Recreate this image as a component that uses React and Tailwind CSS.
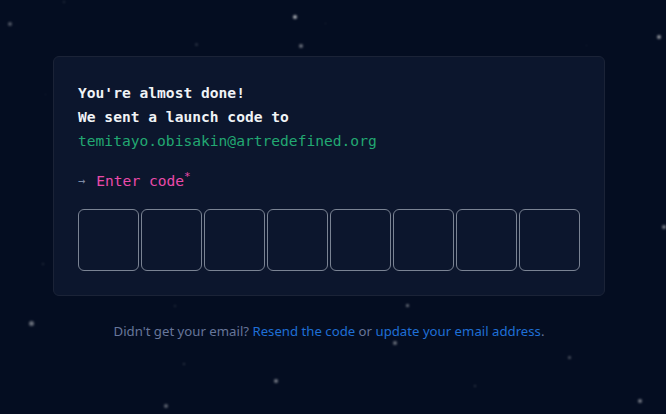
import React from 'react';

const STARS = [
  { x: 293, y: 15, s: 4, o: 0.65 },
  { x: 8, y: 22, s: 4, o: 0.3 },
  { x: 299, y: 44, s: 4, o: 0.4 },
  { x: 657, y: 35, s: 4, o: 0.55 },
  { x: 195, y: 43, s: 3, o: 0.15 },
  { x: 325, y: 23, s: 1, o: 0.2 },
  { x: 63, y: 1, s: 2, o: 0.15 },
  { x: 586, y: 45, s: 1, o: 0.15 },
  { x: 45, y: 94, s: 1, o: 0.15 },
  { x: 42, y: 263, s: 2, o: 0.15 },
  { x: 662, y: 225, s: 4, o: 0.45 },
  { x: 29, y: 321, s: 5, o: 0.4 },
  { x: 406, y: 304, s: 3, o: 0.45 },
  { x: 393, y: 341, s: 4, o: 0.4 },
  { x: 274, y: 379, s: 4, o: 0.45 },
  { x: 164, y: 404, s: 4, o: 0.35 },
  { x: 568, y: 356, s: 3, o: 0.3 },
  { x: 638, y: 399, s: 4, o: 0.45 },
  { x: 183, y: 363, s: 2, o: 0.2 },
  { x: 474, y: 385, s: 2, o: 0.2 },
  { x: 174, y: 305, s: 2, o: 0.15 },
  { x: 277, y: 334, s: 3, o: 0.15 },
];

const mono = { fontFamily: '"DejaVu Sans Mono", "Liberation Mono", monospace' };

export default function App() {
  return (
    <div className="relative min-h-[414px] w-full overflow-hidden bg-[#040d21]">
      {STARS.map((st, i) => (
        <span
          key={i}
          className="absolute rounded-full bg-white blur-[1px]"
          style={{ left: st.x, top: st.y, width: st.s, height: st.s, opacity: st.o }}
        />
      ))}

      <div className="relative flex flex-col items-center pt-[56px] pr-2">
        <div className="w-[552px] rounded-md border border-[#1b2337] bg-[#0c162d] p-6" style={mono}>
          <div className="text-[14.6px] font-bold leading-6 text-[#f0f3f6]">
            <p>You're almost done!</p>
            <p>We sent a launch code to</p>
          </div>
          <p className="text-[14.6px] leading-6 text-[#22a872]">temitayo.obisakin@artredefined.org</p>

          <div className="mt-4 flex items-center text-[14.6px] leading-6">
            <span className="text-[12px] text-[#7d8ba5]">→</span>
            <span className="ml-[11px] text-[#ea4aaa]">Enter code</span>
            <span className="-mt-2 text-[11px] text-[#ea4aaa]">*</span>
          </div>

          <div className="mt-4 flex gap-[2px]">
            {Array.from({ length: 8 }).map((_, i) => (
              <div key={i} className="h-[62px] w-[61px] rounded-md border border-[#7a8393] bg-[#0c162d]" />
            ))}
          </div>
        </div>

        <p
          className="mt-[26px] text-[13.2px] text-[#67769a]"
          style={{ fontFamily: '"Noto Sans", "Open Sans", sans-serif' }}
        >
          Didn't get your email?{' '}
          <a className="text-[#1f6fd6]">Resend the code</a> or{' '}
          <a className="text-[#1f6fd6]">update your email address</a>.
        </p>
      </div>
    </div>
  );
}
